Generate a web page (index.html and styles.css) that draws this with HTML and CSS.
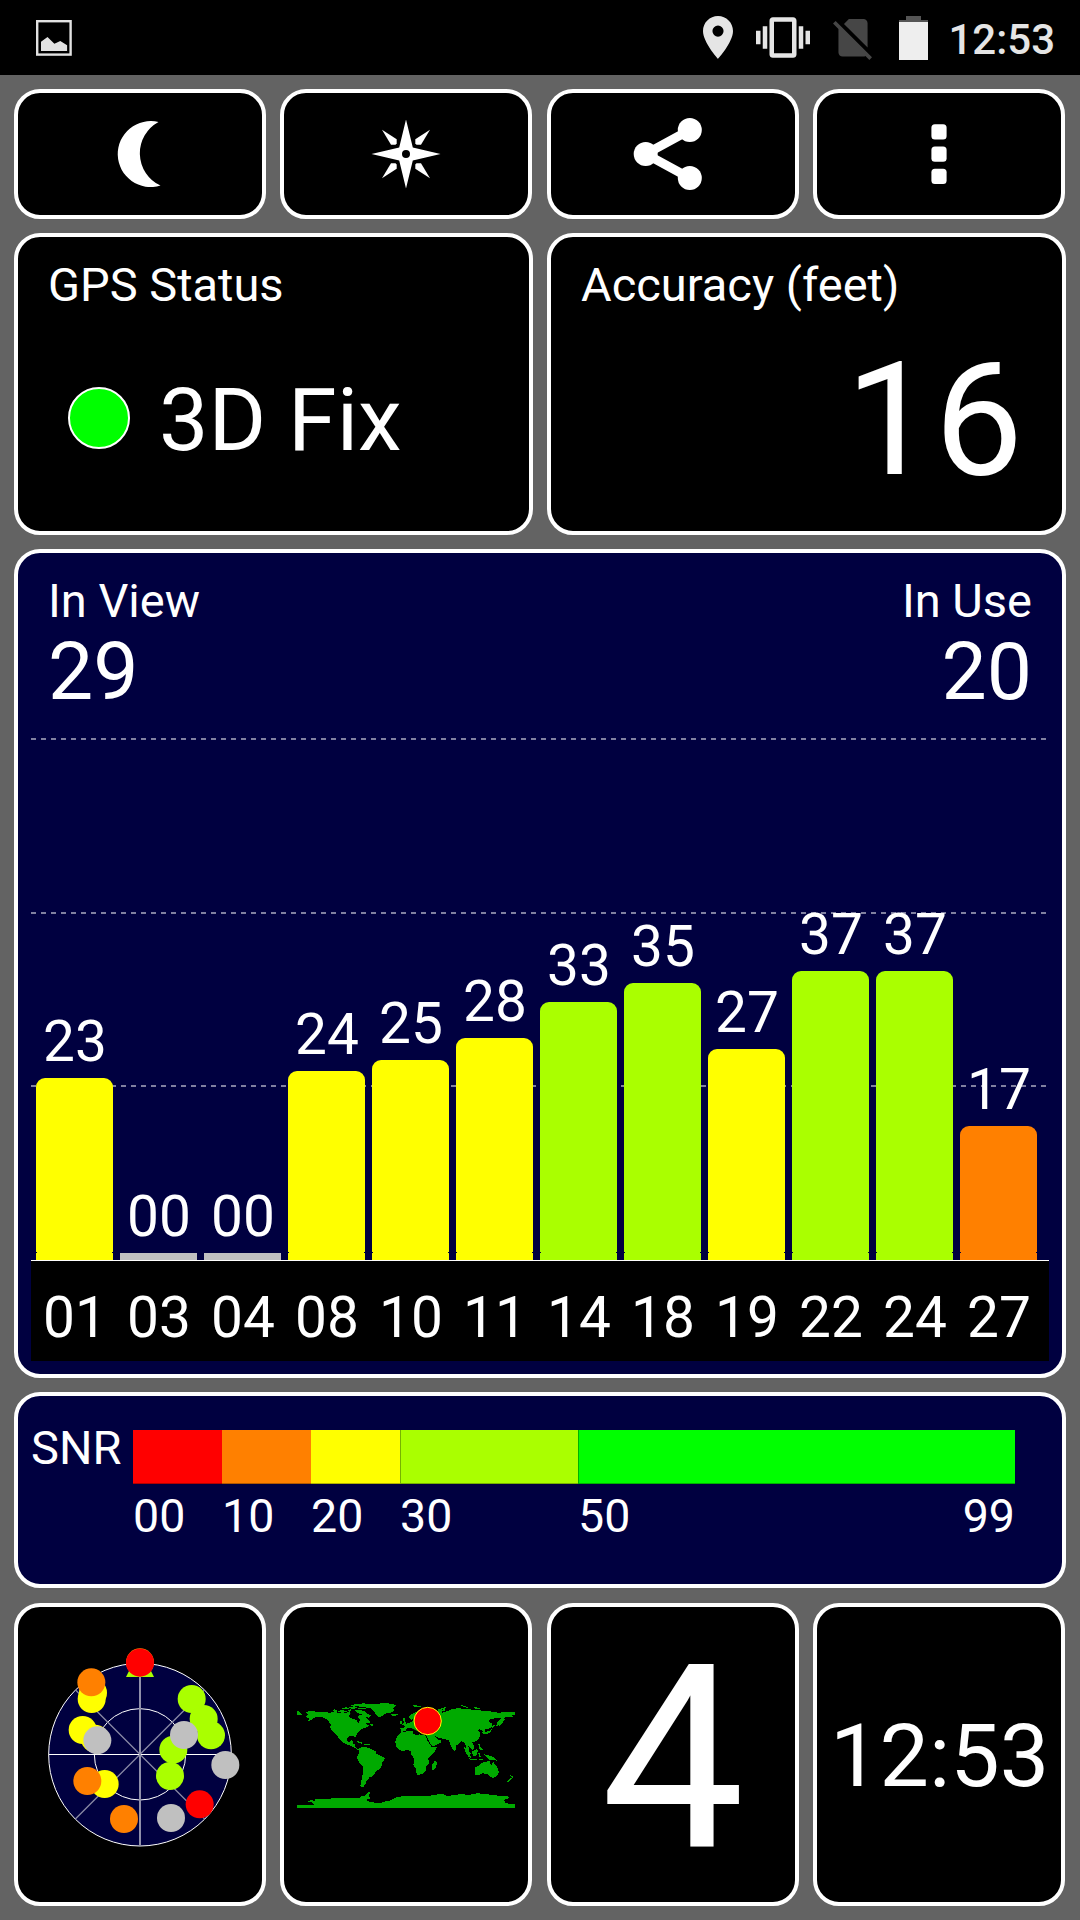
FILE: index.html
```
<!DOCTYPE html>
<html lang="en">
<head>
    <meta charset="UTF-8">
    <meta name="viewport" content="width=device-width, initial-scale=1.0">
    <title>GPS Test</title>
    <link rel="stylesheet" href="styles.css">
</head>
<body>
    <header class="status-bar">
        <svg class="icon-picture" viewBox="0 0 36 36">
            <rect x="1.2" y="1.2" width="33.4" height="33.4" fill="none" stroke="#e2e2e2" stroke-width="2.4"/>
            <path d="M5 21.7L11.5 17 18.4 23.7 24.3 21 31.1 25.3V31H5z" fill="#e2e2e2"/>
        </svg>
        <div class="status-icons">
            <svg class="icon-pin" viewBox="5 2 14 20" fill="#e5e5e5">
                <path d="M12 2C8.13 2 5 5.13 5 9c0 5.25 7 13 7 13s7-7.75 7-13c0-3.87-3.13-7-7-7zm0 9.6a2.6 2.6 0 1 1 0-5.2 2.6 2.6 0 0 1 0 5.2z"/>
            </svg>
            <svg class="icon-vibrate" viewBox="0 3 24 18" fill="#e5e5e5">
                <path d="M0 15h2V9H0v6zm3 2h2V7H3v10zm19-8v6h2V9h-2zm-3 8h2V7h-2v10zM16.5 3h-9C6.67 3 6 3.67 6 4.5v15c0 .83.67 1.5 1.5 1.5h9c.83 0 1.5-.67 1.5-1.5v-15c0-.83-.67-1.5-1.5-1.5zM16 19H8V5h8v14z"/>
            </svg>
            <svg class="icon-sim" viewBox="2.38 3 18.74 19.62" fill="#464646">
                <path d="M18.99 5c0-1.1-.89-2-1.99-2h-7L7.66 5.34 19 16.68 18.99 5zM3.65 3.88L2.38 5.15 5 7.77V19c0 1.1.9 2 2 2h10.01c.35 0 .67-.1.96-.26l1.88 1.88 1.27-1.27L3.65 3.88z"/>
            </svg>
            <svg class="icon-battery" viewBox="0 0 29 44">
                <path d="M7 0h15v4h7v2H0V4h7z" fill="#555"/>
                <path d="M0 6h29v38H0z" fill="#eee"/>
            </svg>
            <span class="clock">12:53</span>
        </div>
    </header>

    <main class="screen">
        <div class="row">
            <button class="panel tool" aria-label="Night mode">
                <svg viewBox="-40 -40 80 80" fill="#fff">
                    <path d="M18.5 -32A33 33 0 1 0 20.5 31.6A35.6 35.6 0 0 1 18.5 -32z"/>
                </svg>
            </button>
            <button class="panel tool" aria-label="Compass">
                <svg viewBox="-40 -40 80 80" fill="#fff">
                    <path fill-rule="evenodd" d="M0 -34.5L6.8 -6.6 34.5 0 6.8 6.6 0 34.5 -6.8 6.6 -34.5 0 -6.8 -6.6zM4 0A4 4 0 1 0 -4 0A4 4 0 1 0 4 0z"/>
                    <path d="M-24 -24.3L-9.3 -14.8 -9.3 -10.5 -10.5 -9.3 -15 -9.3z"/>
                    <path d="M24 -24.3L9.3 -14.8 9.3 -10.5 10.5 -9.3 15 -9.3z"/>
                    <path d="M-24 24.3L-9.3 14.8 -9.3 10.5 -10.5 9.3 -15 9.3z"/>
                    <path d="M24 24.3L9.3 14.8 9.3 10.5 10.5 9.3 15 9.3z"/>
                </svg>
            </button>
            <button class="panel tool" aria-label="Share">
                <svg viewBox="-40 -40 80 80" fill="#fff">
                    <path d="M16.8 -24L-27.3 0 16.8 24" fill="none" stroke="#fff" stroke-width="9"/>
                    <circle cx="-27.3" cy="0" r="12"/>
                    <circle cx="16.8" cy="-24" r="12"/>
                    <circle cx="16.8" cy="24" r="12"/>
                </svg>
            </button>
            <button class="panel tool" aria-label="Menu">
                <svg viewBox="-40 -40 80 80" fill="#fff">
                    <rect x="-7.6" y="-29.8" width="15.2" height="15.2" rx="3.5"/>
                    <rect x="-7.6" y="-7.4" width="15.2" height="15.2" rx="3.5"/>
                    <rect x="-7.6" y="14.8" width="15.2" height="15.2" rx="3.5"/>
                </svg>
            </button>
        </div>

        <div class="row row-wide">
            <section class="panel info">
                <h2>GPS Status</h2>
                <div class="fix">
                    <span class="fix-light"></span>
                    <span>3D Fix</span>
                </div>
            </section>
            <section class="panel info">
                <h2>Accuracy (feet)</h2>
                <div class="accuracy">16</div>
            </section>
        </div>

        <section class="panel chart">
            <div class="chart-head">
                <div>
                    <h2>In View</h2>
                    <div class="count">29</div>
                </div>
                <div class="chart-head-right">
                    <h2>In Use</h2>
                    <div class="count">20</div>
                </div>
            </div>
            <div class="plot">
                <div class="col"><span>23</span><div class="bar yellow" style="height: 182px"></div></div>
                <div class="col"><span>00</span><div class="bar none" style="height: 7px"></div></div>
                <div class="col"><span>00</span><div class="bar none" style="height: 7px"></div></div>
                <div class="col"><span>24</span><div class="bar yellow" style="height: 189px"></div></div>
                <div class="col"><span>25</span><div class="bar yellow" style="height: 200px"></div></div>
                <div class="col"><span>28</span><div class="bar yellow" style="height: 222px"></div></div>
                <div class="col"><span>33</span><div class="bar lime" style="height: 258px"></div></div>
                <div class="col"><span>35</span><div class="bar lime" style="height: 277px"></div></div>
                <div class="col"><span>27</span><div class="bar yellow" style="height: 211px"></div></div>
                <div class="col"><span>37</span><div class="bar lime" style="height: 289px"></div></div>
                <div class="col"><span>37</span><div class="bar lime" style="height: 289px"></div></div>
                <div class="col"><span>17</span><div class="bar orange" style="height: 134px"></div></div>
            </div>
            <div class="axis">
                <span>01</span>
                <span>03</span>
                <span>04</span>
                <span>08</span>
                <span>10</span>
                <span>11</span>
                <span>14</span>
                <span>18</span>
                <span>19</span>
                <span>22</span>
                <span>24</span>
                <span>27</span>
            </div>
        </section>

        <section class="panel snr">
            <h2>SNR</h2>
            <div class="scale">
                <div class="seg red"></div>
                <div class="seg orange"></div>
                <div class="seg yellow"></div>
                <div class="seg lime"></div>
                <div class="seg green"></div>
                <span>00</span>
                <span>10</span>
                <span>20</span>
                <span>30</span>
                <span class="ends">50<b>99</b></span>
            </div>
        </section>

        <div class="row">
            <section class="panel tile">
                <!-- sky view -->
                <svg viewBox="54 51 732 885">
                    <circle cx="420" cy="494" r="274" fill="#000040" stroke="#fff" stroke-width="3"/>
                    <circle cx="420" cy="493" r="137" fill="none" stroke="#fff" stroke-width="3"/>
                    <path d="M226 299L614 687M614 299L226 687" stroke="#8888a4" stroke-width="4"/>
                    <path d="M146 493.5H694" stroke="#fff" stroke-width="3"/>
                    <path d="M420 220V768" stroke="#9090aa" stroke-width="6"/>
                    <path d="M420 176L462 261H378z" fill="#af0"/>
                    <circle cx="420" cy="217" r="42" fill="#ff8000"/>
                    <circle cx="420" cy="218" r="42" fill="#f00"/>
                    <circle cx="279" cy="308" r="42" fill="#ff0"/>
                    <circle cx="275" cy="327" r="42" fill="#ff0"/>
                    <circle cx="274" cy="277" r="42" fill="#ff8000"/>
                    <circle cx="248" cy="420" r="42" fill="#ff0"/>
                    <circle cx="285" cy="446" r="42" fill="#ff0"/>
                    <circle cx="292" cy="451" r="42" fill="#c0c0c0"/>
                    <circle cx="314" cy="582" r="42" fill="#ff0"/>
                    <circle cx="262" cy="573" r="42" fill="#ff8000"/>
                    <circle cx="372" cy="687" r="42" fill="#ff8000"/>
                    <circle cx="513" cy="684" r="42" fill="#c0c0c0"/>
                    <circle cx="599" cy="643" r="42" fill="#f00"/>
                    <circle cx="510" cy="558" r="42" fill="#af0"/>
                    <circle cx="520" cy="479" r="42" fill="#af0"/>
                    <circle cx="575" cy="327" r="42" fill="#af0"/>
                    <circle cx="611" cy="387" r="42" fill="#af0"/>
                    <circle cx="633" cy="436" r="42" fill="#af0"/>
                    <circle cx="552" cy="435" r="42" fill="#c0c0c0"/>
                    <circle cx="676" cy="525" r="42" fill="#c0c0c0"/>
                </svg>
            </section>
            <section class="panel tile">
                <!-- world map -->
                <svg viewBox="13 -219 732 885">
                    <g fill="#0a0" shape-rendering="crispEdges">
                        <path d="M51 91L55 92 62 99 69 102 66 105 51 104z"/>
                        <path d="M78 98L87 93 110 95 128 96 150 98 165 96 180 99 200 99 207 96 213 98 212 104 207 109 213 114 222 117 232 122 234 128 238 128 241 120 235 113 238 106 248 104 257 108 262 116 270 122 273 129 264 130 258 129 261 134 269 137 262 142 252 144 246 147 240 154 232 160 229 169 225 171 220 167 208 169 202 174 203 184 209 187 215 181 221 182 219 190 225 193 227 201 233 206 241 206 239 210 231 208 222 201 207 195 197 191 187 186 178 176 174 170 166 160 156 150 152 142 153 134 147 124 138 116 128 112 113 112 100 113 97 119 83 124 91 117 82 113 78 108 88 105z"/>
                        <path d="M157 90L166 88 174 94 168 97zM172 92L190 91 202 94 192 98 178 97zM184 84L200 82 212 84 204 88 190 88zM204 90L214 88 216 94 208 95zM206 82L224 79 232 82 222 88zM208 76L226 73 252 70 270 72 256 77 240 80 228 78zM225 90L242 89 256 95 266 103 274 106 268 113 258 110 246 103 234 99zM234 84L256 83 260 87 240 88zM270 131L280 132 281 137 274 137zM230 182L248 188 246 191 232 186zM252 191L270 192 270 196 254 195z"/>
                        <path d="M232 78L246 74 272 73 292 72 312 69 328 70 332 73 354 74 346 79 340 86 344 92 334 98 318 101 308 107 303 112 295 110 287 103 284 94 274 85 256 82z"/>
                        <path d="M334 102L353 101 354 105 344 108 336 106z"/>
                        <path d="M237 207L246 200 256 202 267 203 277 209 287 213 291 222 303 228 315 234 314 241 307 249 305 262 296 270 288 273 286 280 278 289 270 291 266 299 260 304 258 312 251 321 242 319 244 306 247 294 250 276 250 259 240 249 232 236 234 227 238 218z"/>
                        <path d="M366 156L378 155 392 152 400 153 401 161 413 166 420 163 438 167 442 180 450 193 457 202 472 201 469 209 457 224 446 236 448 250 440 259 439 270 430 281 414 286 409 278 408 266 401 254 404 243 401 232 394 224 395 214 383 210 367 213 356 208 348 197 347 183 354 168z"/>
                        <path d="M466 241L472 249 466 268 458 270 456 256z"/>
                        <path d="M364 155L362 144 378 142 374 136 384 130 398 124 400 118 394 120 387 113 390 106 404 98 420 90 440 92 456 96 470 98 478 90 496 88 500 90 482 96 488 98 500 94 516 88 536 84 546 86 560 86 580 90 600 90 606 92 620 93 640 95 656 98 672 97 680 95 705 97 705 105 696 104 700 110 684 110 674 113 675 120 667 130 658 138 658 126 664 115 652 114 634 117 626 123 636 130 636 140 626 148 616 148 618 158 611 160 608 152 600 148 595 151 600 156 600 168 598 177 590 184 578 186 580 194 585 201 579 212 572 204 566 198 568 212 573 221 565 220 559 208 558 196 552 186 546 184 538 190 528 198 528 210 524 212 518 205 512 194 508 182 494 176 478 175 468 169 464 168 473 178 486 180 483 188 470 195 458 199 452 190 444 174 440 166 444 161 432 163 420 157 410 154 400 148 396 144 384 144 376 154z"/>
                        <path d="M370 113L376 114 375 122 380 130 377 135 367 135 372 127zM361 125L368 122 368 130 361 132zM400 76L424 77 422 82 404 82zM474 88L500 81 498 84 480 92zM542 75L556 78 570 84 556 82zM584 82L602 83 600 86 586 86z"/>
                        <path d="M607 158L614 162 628 160 635 152 638 146 634 146 630 153 618 155 610 155zM634 140L642 134 646 138 638 143zM652 128L664 116 668 118 660 134 650 139z"/>
                        <path d="M551 198L562 210 572 226 574 234 568 232 558 218zM568 235L592 238 590 241 572 239zM576 216L592 206 595 212 590 226 582 228zM595 190L600 192 603 201 609 207 608 213 600 208zM596 218L606 218 600 222 604 232 598 230zM612 222L622 225 636 228 648 236 652 243 644 240 630 240 620 232zM596 236L612 239 602 241z"/>
                        <path d="M585 263L596 258 606 250 613 246 620 246 624 242 632 244 630 252 637 255 640 243 646 254 656 266 657 278 650 290 640 294 630 290 622 282 608 280 598 285 587 284z"/>
                        <path d="M642 296L649 296 646 300zM690 286L702 288 698 294zM694 293L698 296 686 306 681 304z"/>
                        <path d="M51 375H103L96 366 84 366 92 360 108 363 104 359 122 356 190 355 192 353 240 355 244 349 258 346 266 335 272 336 268 345 271 356 258 360 268 365 300 370 318 364 334 361 344 355 356 350 390 348 440 349 468 344 488 342 504 348 540 343 572 344 592 340 622 342 640 346 686 348 688 354 674 359 675 368 690 372 705 373V383H51z"/>
                    </g>
                    <path d="M384 146L394 146 404 156 434 162 440 160 426 152 414 154 400 146z" fill="#000"/>
                    <path d="M212 98L220 96 232 104 236 112 222 115 210 110z" fill="#000"/>
                    <circle cx="444" cy="123" r="41" fill="#f00" stroke="#ff0" stroke-width="3"/>
                </svg>
            </section>
            <section class="panel tile speed">4</section>
            <section class="panel tile time">12:53</section>
        </div>
    </main>
</body>
</html>
```

FILE: styles.css
```
* {
    box-sizing: border-box;
}

body {
    font-family: Roboto, "Liberation Sans", sans-serif;
    background-color: #636363;
    color: #ffffff;
    margin: 0;
    padding: 0;
    width: 1080px;
    height: 1920px;
    overflow: hidden;
}

svg {
    display: block;
}

h2 {
    font-size: 47px;
    font-weight: 400;
    line-height: 48px;
    margin: 0;
}

/* status bar */
.status-bar {
    height: 75px;
    background-color: #000000;
    display: flex;
    align-items: center;
    justify-content: space-between;
    padding: 0 25px 0 36px;
}

.icon-picture {
    width: 36px;
    height: 36px;
}

.status-icons {
    display: flex;
    align-items: center;
}

.icon-pin {
    width: 30px;
    height: 43px;
    margin-right: 23px;
}

.icon-vibrate {
    width: 54px;
    height: 41px;
    margin-right: 23px;
}

.icon-sim {
    width: 39px;
    height: 41px;
    margin: 3px 27px 0 0;
}

.icon-battery {
    width: 29px;
    height: 44px;
    margin-right: 20px;
}

.clock {
    font-size: 42px;
    font-weight: 500;
    line-height: 42px;
    color: #e5e5e5;
    margin-top: 4px;
}

/* panels */
.screen {
    padding: 14px 14px 0;
    display: flex;
    flex-direction: column;
    gap: 14px;
}

.row {
    display: grid;
    grid-template-columns: repeat(4, 252px);
    column-gap: 14.4px;
}

.row-wide {
    grid-template-columns: 519px 519px;
    column-gap: 14px;
}

.panel {
    background-color: #000000;
    border: 4px solid #ffffff;
    border-radius: 26px;
}

.tool {
    height: 130px;
    padding: 0;
    display: flex;
    align-items: center;
    justify-content: center;
}

.tool svg {
    width: 80px;
    height: 80px;
}

.info {
    height: 302px;
    padding: 24px 39px 0 30px;
}

.fix {
    display: flex;
    align-items: center;
    gap: 29px;
    margin: 67px 0 0 20px;
    font-size: 88px;
    line-height: 88px;
}

.fix-light {
    width: 62px;
    height: 62px;
    margin-bottom: 4px;
    border-radius: 50%;
    border: 2px solid #ffffff;
    background-color: #00ff00;
}

.accuracy {
    margin-top: 31px;
    font-size: 158px;
    line-height: 160px;
    text-align: right;
}

/* satellite chart */
.chart {
    height: 829px;
    background-color: #000040;
}

.chart-head {
    height: 185px;
    padding: 24px 30px 0;
    display: flex;
    justify-content: space-between;
}

.chart-head-right {
    text-align: right;
}

.count {
    margin-top: 6px;
    font-size: 80.5px;
    line-height: 82px;
}

.plot {
    height: 522px;
    margin: 0 13px;
    padding-left: 5px;
    display: flex;
    align-items: flex-end;
    gap: 7px;
    background-image:
        repeating-linear-gradient(to right, #8080a0 0 5px, transparent 5px 10px),
        repeating-linear-gradient(to right, #8080a0 0 5px, transparent 5px 10px),
        repeating-linear-gradient(to right, #8080a0 0 5px, transparent 5px 10px);
    background-size: 100% 2px;
    background-position: 0 0, 0 174px, 0 347px;
    background-repeat: no-repeat;
}

.col {
    width: 77px;
    display: flex;
    flex-direction: column;
    align-items: center;
    font-size: 56.8px;
    line-height: 58px;
}

.col span {
    margin-bottom: 7px;
    padding-left: 1px;
}

.bar {
    width: 77px;
    border-radius: 9px 9px 0 0;
    display: flex;
    align-items: flex-end;
}

/* small notch where the rounded top meets the base */
.bar::after {
    content: "";
    width: 100%;
    height: 1px;
    margin-bottom: 7px;
    border: solid #000040;
    border-width: 0 1px;
}

.bar.none {
    border-radius: 0;
}

.bar.none::after {
    display: none;
}

.axis {
    height: 101px;
    margin: 0 13px;
    padding: 28px 0 0 5px;
    display: flex;
    gap: 7px;
    background-color: #000000;
    border-top: 1px solid #ffffff;
    font-size: 56.8px;
    line-height: 57px;
}

.axis span {
    width: 77px;
    padding-left: 1px;
    text-align: center;
}

.red { background-color: #ff0000; }
.orange { background-color: #ff8000; }
.yellow { background-color: #ffff00; }
.lime { background-color: #aaff00; }
.green { background-color: #00ff00; }
.none { background-color: #c0c0c0; }

/* signal scale */
.snr {
    height: 196px;
    background-color: #000040;
    display: flex;
    padding: 28px 47px 0 13px;
}

.snr h2 {
    width: 102px;
}

.scale {
    flex: 1;
    margin-top: 6px;
    display: grid;
    grid-template-columns: 89px 89px 89px 178px 1fr;
    grid-template-rows: 54px 48px;
    row-gap: 8px;
    font-size: 46.5px;
    line-height: 48px;
}

.seg {
    box-shadow: inset 0 -1px rgba(0, 0, 0, 0.3);
}

.seg.lime, .seg.green {
    box-shadow: inset 1px -1px rgba(0, 0, 0, 0.3);
}

.ends {
    display: flex;
    justify-content: space-between;
}

.ends b {
    font-weight: 400;
}

/* bottom tiles */
.tile {
    height: 303px;
    margin-top: 1px;
    display: flex;
    align-items: center;
    justify-content: center;
}

.tile svg {
    width: 244px;
    height: 295px;
}

.speed {
    padding-top: 8px;
    font-size: 256px;
    line-height: 256px;
}

.time {
    padding: 2px 0 0 1px;
    font-size: 88px;
    line-height: 88px;
}
```
